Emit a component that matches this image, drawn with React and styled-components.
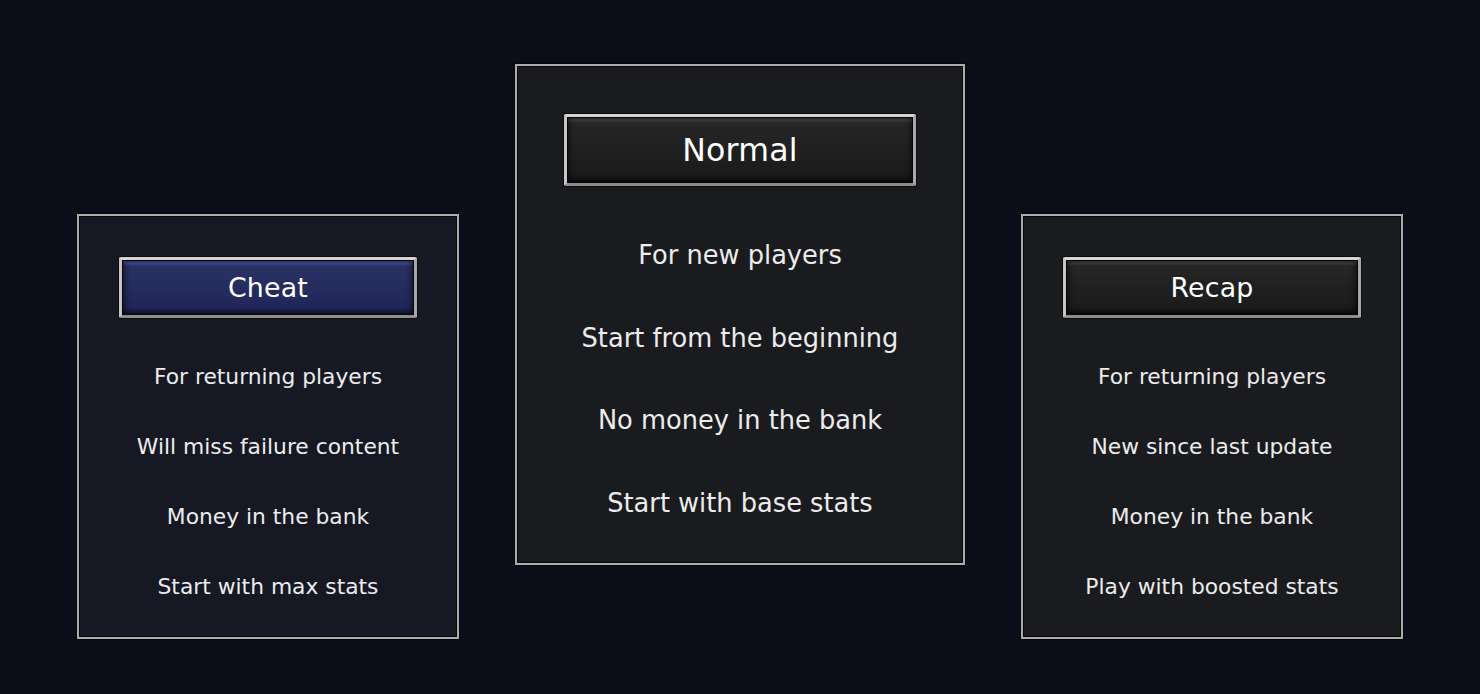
import React from 'react';
import styled, { createGlobalStyle, css } from 'styled-components';

const GlobalStyle = createGlobalStyle`
  html, body {
    margin: 0;
    padding: 0;
    background: #0b0e18;
    font-family: "DejaVu Sans", "Liberation Sans", sans-serif;
  }
`;

const px = (n) => (p) => `${n * p.$scale}px`;

const Page = styled.div`
  width: 1480px;
  height: 694px;
  background: #0b0e18;
  display: flex;
  justify-content: center;
  align-items: flex-start;
  gap: 56px;
  padding-top: 64px;
  box-sizing: border-box;
`;

const Card = styled.div`
  box-sizing: border-box;
  width: ${px(382)};
  height: ${px(425)};
  margin-top: ${(p) => (p.$raised ? 0 : 150)}px;
  padding-top: ${px(41)};
  background: ${(p) => (p.$tint === 'blue' ? '#161824' : '#1a1b1f')};
  border: 2px solid #acacac;
  box-shadow: inset 0 0 0 1px #08080b, 0 0 0 1px #07080c;
  display: flex;
  flex-direction: column;
  align-items: center;
`;

const blueFill = css`
  background: linear-gradient(
    to bottom,
    #20264f 0px,
    #3f488c 2px,
    #3c4588 4px,
    #2a3166 6px,
    #252c5e 50%,
    #20265a 85%,
    #181c44 100%
  );
`;

const darkFill = css`
  background: linear-gradient(
    to bottom,
    #1c1c1c 0px,
    #3c3c3c 2px,
    #383838 4px,
    #262626 6px,
    #202020 50%,
    #1b1b1b 85%,
    #121212 100%
  );
`;

const ModeButton = styled.button`
  box-sizing: border-box;
  width: ${px(298)};
  height: ${px(61)};
  padding: 0;
  border: 3px solid;
  border-color: #d4d4d4 #a8a8a8 #8e8e8e #c6c6c6;
  border-radius: 2px;
  box-shadow: 0 0 0 1px #0c0c0c, inset 0 0 0 1px #060606,
    inset 4px 0 5px rgba(0, 0, 0, 0.35), inset -4px 0 5px rgba(0, 0, 0, 0.35),
    inset 0 -3px 4px rgba(0, 0, 0, 0.3);
  ${(p) => (p.$tint === 'blue' ? blueFill : darkFill)}
  color: #ffffff;
  font-family: "DejaVu Sans", "Liberation Sans", sans-serif;
  font-size: ${px(26.8)};
  letter-spacing: 0.2px;
  cursor: pointer;
  flex-shrink: 0;
`;

const List = styled.ul`
  list-style: none;
  margin: ${px(24)} 0 0;
  padding: 0;
  width: 100%;
`;

const Item = styled.li`
  height: ${px(70)};
  line-height: ${px(70)};
  text-align: center;
  color: #ececec;
  font-size: ${px(21.8)};
  white-space: nowrap;
`;

const modes = [
  {
    name: 'Cheat',
    tint: 'blue',
    scale: 1,
    lines: ['For returning players', 'Will miss failure content', 'Money in the bank', 'Start with max stats'],
  },
  {
    name: 'Normal',
    tint: 'dark',
    scale: 1.178,
    raised: true,
    lines: ['For new players', 'Start from the beginning', 'No money in the bank', 'Start with base stats'],
  },
  {
    name: 'Recap',
    tint: 'dark',
    scale: 1,
    lines: ['For returning players', 'New since last update', 'Money in the bank', 'Play with boosted stats'],
  },
];

const ModeCard = ({ mode }) => (
  <Card $scale={mode.scale} $tint={mode.tint} $raised={mode.raised}>
    <ModeButton $scale={mode.scale} $tint={mode.tint}>
      {mode.name}
    </ModeButton>
    <List $scale={mode.scale}>
      {mode.lines.map((line) => (
        <Item key={line} $scale={mode.scale}>
          {line}
        </Item>
      ))}
    </List>
  </Card>
);

const App = () => (
  <>
    <GlobalStyle />
    <Page>
      {modes.map((m) => (
        <ModeCard key={m.name} mode={m} />
      ))}
    </Page>
  </>
);

export default App;
